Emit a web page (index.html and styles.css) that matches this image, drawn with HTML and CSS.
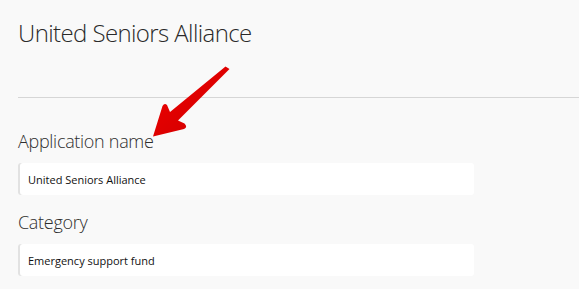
FILE: index.html
```html
<!DOCTYPE html>
<html lang="en">
<head>
    <meta charset="UTF-8">
    <meta name="viewport" content="width=device-width, initial-scale=1.0">
    <title>United Seniors Alliance</title>
    <link rel="stylesheet" href="styles.css">
</head>
<body>
    <div class="page">
        <h1 class="title">United Seniors Alliance</h1>
        <div class="divider"></div>
        <form class="form">
            <div class="field">
                <label class="label" for="app-name">Application name</label>
                <input id="app-name" class="input" type="text" value="United Seniors Alliance">
            </div>
            <div class="field">
                <label class="label" for="category">Category</label>
                <input id="category" class="input" type="text" value="Emergency support fund">
            </div>
        </form>
        <svg class="arrow" width="579" height="289" viewBox="0 0 579 289">
            <defs>
                <linearGradient id="arrowFill" x1="0" y1="0" x2="1" y2="1">
                    <stop offset="0" stop-color="#f20000"/>
                    <stop offset="1" stop-color="#cc0000"/>
                </linearGradient>
            </defs>
            <path d="M225.5 66.5 L229.5 69 L178 120.5 L184.5 123.5 Q188 127 184 129 L153 136.5 L162.5 106 Q164.5 102.5 167 105 L170 112 Z" fill="url(#arrowFill)"/>
        </svg>
    </div>
</body>
</html>
```

FILE: styles.css
```css
body {
    margin: 0;
    background: #f9f9f9;
    font-family: 'Open Sans', 'Noto Sans', sans-serif;
    color: #1a1a1a;
}

.page {
    position: relative;
    width: 579px;
    height: 289px;
    padding: 17px 0 0 18px;
    box-sizing: border-box;
    overflow: hidden;
}

.title {
    margin: 0;
    font-size: 24px;
    font-weight: 300;
    line-height: 32px;
    letter-spacing: -0.6px;
    color: #2a2a2a;
}

.divider {
    margin-top: 48px;
    border-top: 1px solid #d6d6d6;
}

.form {
    margin-top: 31px;
    width: 456px;
}

.field {
    display: flex;
    flex-direction: column;
    gap: 10px;
    margin-bottom: 15px;
}

.label {
    font-size: 18px;
    font-weight: 300;
    line-height: 24px;
    letter-spacing: -0.3px;
    color: #2e2e2e;
}

.input {
    height: 32px;
    padding: 0 10px;
    border: none;
    border-radius: 3px;
    background: #fff;
    box-shadow: inset 2px 0 0 #e2e2e2;
    font-family: inherit;
    font-size: 11px;
    color: #111;
    outline: none;
}

.arrow {
    position: absolute;
    top: 0;
    left: 0;
    pointer-events: none;
}
```
